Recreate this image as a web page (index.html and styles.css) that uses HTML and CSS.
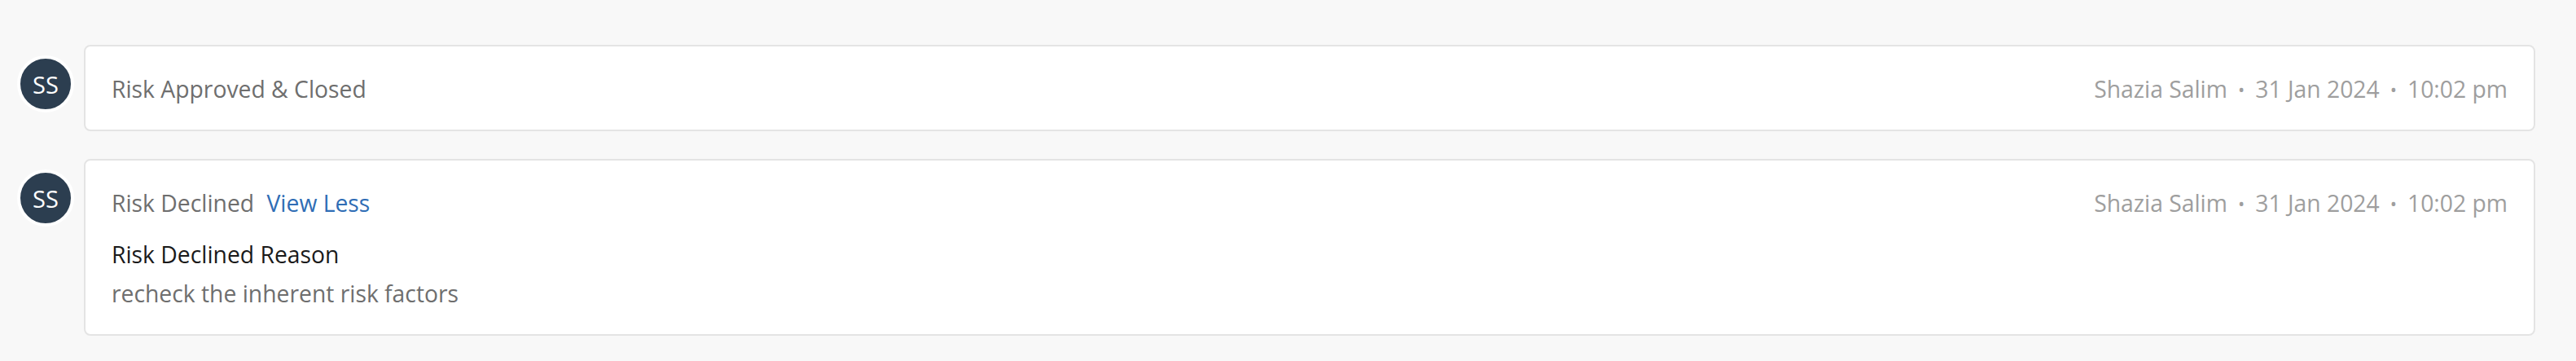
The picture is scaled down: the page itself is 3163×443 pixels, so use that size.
FILE: index.html
```html
<!DOCTYPE html>
<html lang="en">
<head>
    <meta charset="UTF-8">
    <title>Risk Activity</title>
    <link rel="stylesheet" href="styles.css">
</head>
<body>
    <div class="timeline">
        <div class="entry">
            <div class="avatar">SS</div>
            <div class="card">
                <div class="card-head">
                    <div class="title">Risk Approved &amp; Closed</div>
                    <div class="meta">
                        <span>Shazia Salim</span><span class="dot">&bull;</span><span>31 Jan 2024</span><span class="dot">&bull;</span><span>10:02 pm</span>
                    </div>
                </div>
            </div>
        </div>

        <div class="entry">
            <div class="avatar">SS</div>
            <div class="card">
                <div class="card-head">
                    <div class="title">Risk Declined <a href="#" class="toggle">View Less</a></div>
                    <div class="meta">
                        <span>Shazia Salim</span><span class="dot">&bull;</span><span>31 Jan 2024</span><span class="dot">&bull;</span><span>10:02 pm</span>
                    </div>
                </div>
                <div class="details">
                    <div class="details-label">Risk Declined Reason</div>
                    <div class="details-text">recheck the inherent risk factors</div>
                </div>
            </div>
        </div>
    </div>
</body>
</html>
```

FILE: styles.css
```css
body {
    margin: 0;
    background-color: #f8f8f8;
    font-family: "Open Sans", "Noto Sans", sans-serif;
    font-size: 28.3px;
}
.timeline {
    display: flex;
    flex-direction: column;
    gap: 34px;
    padding: 55px 50px 0 21px;
}
.entry {
    display: flex;
    align-items: flex-start;
    gap: 12px;
}
.avatar {
    flex: none;
    width: 62px;
    height: 62px;
    margin-top: 13px;
    border: 4px solid #fff;
    border-radius: 50%;
    background-color: #2c3e50;
    color: #fff;
    font-size: 29px;
    display: flex;
    align-items: center;
    justify-content: center;
}
.card {
    flex: 1;
    background-color: #fff;
    border: 2px solid #e4e4e4;
    border-radius: 8px;
    padding: 32px 32px 30px;
}
.card-head {
    display: flex;
    justify-content: space-between;
    align-items: center;
    line-height: 40px;
}
.title {
    color: #6e6e6e;
}
.toggle {
    color: #2f6db5;
    text-decoration: none;
    margin-left: 8px;
}
.meta {
    color: #9e9e9e;
}
.dot {
    font-size: 22px;
    margin: 0 13px;
    vertical-align: 2px;
}
.details {
    margin-top: 23px;
}
.details-label {
    color: #1a1a1a;
    line-height: 40px;
}
.details-text {
    color: #6e6e6e;
    line-height: 40px;
    margin-top: 8px;
}
```
